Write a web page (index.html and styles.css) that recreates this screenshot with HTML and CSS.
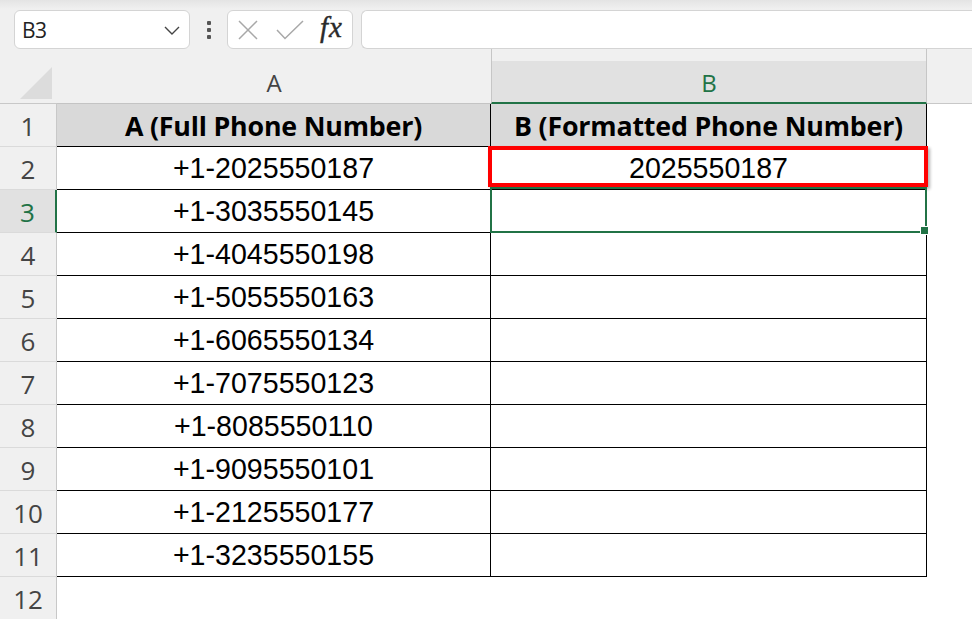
FILE: index.html
```html
<!DOCTYPE html>
<html>
<head>
<meta charset="utf-8">
<link rel="stylesheet" href="styles.css">
</head>
<body>
<div class="app">
  <div class="toolbar">
    <div class="namebox">
      <span class="namebox-text">B3</span>
      <svg class="chev" width="16" height="9" viewBox="0 0 16 9"><path d="M1 1 L8 8 L15 1" fill="none" stroke="#444" stroke-width="1.4"/></svg>
    </div>
    <div class="dots"><span></span><span></span><span></span></div>
    <div class="fbtns">
      <svg width="22" height="20" viewBox="0 0 22 20"><path d="M2 1 L20 19 M20 1 L2 19" stroke="#a8a8a8" stroke-width="1.5" fill="none"/></svg>
      <svg width="28" height="20" viewBox="0 0 28 20"><path d="M1 10 L9 18.5 L27 1" stroke="#a8a8a8" stroke-width="1.5" fill="none"/></svg>
      <span class="fx">fx</span>
    </div>
    <div class="finput"></div>
  </div>

  <div class="sheet">
    <div class="corner"><svg width="36" height="36" viewBox="0 0 36 36"><path d="M34 2 L34 34 L2 34 Z" fill="#dcdcdc"/></svg></div>
    <div class="colhead"><span>A</span></div>
    <div class="colhead sel"><span>B</span></div>
    <div class="colfill"></div>

    <div class="rowhead">1</div>
    <div class="cell hdr">A (Full Phone Number)</div>
    <div class="cell hdr">B (Formatted Phone Number)</div>
    <div class="blank"></div>

    <div class="rowhead">2</div>
    <div class="cell">+1-2025550187</div>
    <div class="cell rel">2025550187<div class="redbox"></div></div>
    <div class="blank"></div>

    <div class="rowhead selrow">3</div>
    <div class="cell">+1-3035550145</div>
    <div class="cell rel"><div class="selbox"></div><div class="handle"></div></div>
    <div class="blank"></div>

    <div class="rowhead">4</div>
    <div class="cell">+1-4045550198</div>
    <div class="cell"></div>
    <div class="blank"></div>

    <div class="rowhead">5</div>
    <div class="cell">+1-5055550163</div>
    <div class="cell"></div>
    <div class="blank"></div>

    <div class="rowhead">6</div>
    <div class="cell">+1-6065550134</div>
    <div class="cell"></div>
    <div class="blank"></div>

    <div class="rowhead">7</div>
    <div class="cell">+1-7075550123</div>
    <div class="cell"></div>
    <div class="blank"></div>

    <div class="rowhead">8</div>
    <div class="cell">+1-8085550110</div>
    <div class="cell"></div>
    <div class="blank"></div>

    <div class="rowhead">9</div>
    <div class="cell">+1-9095550101</div>
    <div class="cell"></div>
    <div class="blank"></div>

    <div class="rowhead">10</div>
    <div class="cell">+1-2125550177</div>
    <div class="cell"></div>
    <div class="blank"></div>

    <div class="rowhead">11</div>
    <div class="cell">+1-3235550155</div>
    <div class="cell"></div>
    <div class="blank"></div>

    <div class="rowhead">12</div>
    <div class="blank"></div>
    <div class="blank"></div>
    <div class="blank"></div>
  </div>
</div>
</body>
</html>
```

FILE: styles.css
```css
html, body {
  margin: 0;
  padding: 0;
  background: #f0f0f0;
  overflow: hidden;
}
.app {
  width: 972px;
  height: 619px;
  overflow: hidden;
  display: flex;
  flex-direction: column;
}
.toolbar {
  height: 50px;
  box-sizing: border-box;
  padding: 10px 0 0 14px;
  display: flex;
  align-items: flex-start;
  background: linear-gradient(#e4e4e4 0px, #f0f0f0 9px);
}
.namebox {
  width: 176px;
  height: 39px;
  box-sizing: border-box;
  background: #fff;
  border: 1px solid #d4d4d4;
  border-radius: 6px;
  display: flex;
  align-items: center;
  justify-content: space-between;
  padding: 0 9px 0 7px;
}
.namebox-text {
  font-family: "Open Sans", sans-serif;
  font-size: 21px;
  color: #222;
  letter-spacing: -0.6px;
}
.chev { margin-top: 2px; }
.dots {
  width: 37px;
  height: 39px;
  display: flex;
  flex-direction: column;
  align-items: center;
  justify-content: center;
  gap: 3px;
}
.dots span {
  width: 4px;
  height: 4px;
  background: #555;
  border-radius: 1px;
}
.fbtns {
  width: 126px;
  height: 39px;
  box-sizing: border-box;
  background: #fff;
  border: 1px solid #d4d4d4;
  border-radius: 6px;
  display: flex;
  align-items: center;
  padding: 0 0 0 9px;
  gap: 16px;
}
.fbtns svg:first-child { margin-right: 1px; }
.fx {
  font-family: "Liberation Serif", "DejaVu Serif", serif;
  font-style: italic;
  font-size: 29px;
  color: #2a2a2a;
  margin-left: 0;
  margin-top: -4px;
  letter-spacing: 1px;
  -webkit-text-stroke: 0.4px #2a2a2a;
}
.finput {
  flex: 1;
  height: 39px;
  margin-left: 8px;
  box-sizing: border-box;
  background: #fff;
  border: 1px solid #d4d4d4;
  border-right: none;
  border-radius: 6px 0 0 6px;
}
.sheet {
  flex: 1;
  display: grid;
  grid-template-columns: 57px 434px 436px 1fr;
  grid-template-rows: 55px repeat(12, 43px);
  background: #fff;
}
.corner {
  background: #f0f0f0;
  border-bottom: 1px solid #c8c8c8;
  box-sizing: border-box;
  display: flex;
  align-items: flex-end;
  justify-content: flex-end;
  padding: 0 3px 2px 0;
}
.colhead {
  background: #f0f0f0;
  border-bottom: 1px solid #c4c4c4;
  box-sizing: border-box;
  display: flex;
  align-items: flex-end;
  justify-content: center;
  padding-bottom: 5px;
  font-family: "Open Sans", sans-serif;
  font-size: 24px;
  color: #444;
}
.colhead:first-of-type { border-left: 1px solid #c8c8c8; }
.colhead span { line-height: 30px; }
.colhead.sel {
  background: linear-gradient(#f0f0f0 0, #f0f0f0 12px, #e1e1e1 12px);
  border-left: 1px solid #c6c6c6;
  border-right: 1px solid #c6c6c6;
  border-bottom: 2px solid #217346;
  padding-bottom: 4px;
  color: #217346;
}
.colfill {
  background: #f0f0f0;
  border-bottom: 1px solid #c8c8c8;
}
.rowhead {
  background: #f0f0f0;
  border-right: 1px solid #c8c8c8;
  border-bottom: 1px solid #dadada;
  box-sizing: border-box;
  display: flex;
  align-items: center;
  justify-content: center;
  font-family: "Open Sans", sans-serif;
  font-size: 26px;
  color: #444;
  padding-top: 1px;
}
.rowhead.selrow {
  background: #e1e1e1;
  color: #217346;
  border-right: 2px solid #217346;
}
.cell {
  background: #fff;
  border-right: 1px solid #000;
  border-bottom: 1px solid #000;
  box-sizing: border-box;
  display: flex;
  align-items: center;
  justify-content: center;
  font-family: "Liberation Sans", Arial, sans-serif;
  font-size: 28.6px;
  color: #000;
  padding-top: 1px;
}
.cell.hdr {
  background: #d9d9d9;
  font-family: "Open Sans", sans-serif;
  font-weight: 700;
  font-size: 26.8px;
  letter-spacing: -0.2px;
}
.cell.rel { position: relative; }
.blank { background: #fff; }
.redbox {
  position: absolute;
  left: -3px;
  right: -2px;
  top: -1px;
  bottom: 2px;
  border: 4px solid #ff0000;
  box-shadow: 2px 2px 3px rgba(0,0,0,0.3);
  pointer-events: none;
}
.selbox {
  position: absolute;
  left: -1px;
  right: -1px;
  top: -3px;
  bottom: -1px;
  border: 2px solid #217346;
}
.handle {
  position: absolute;
  right: -3px;
  bottom: -3px;
  width: 7px;
  height: 7px;
  background: #217346;
  border: 1px solid #fff;
}
```
